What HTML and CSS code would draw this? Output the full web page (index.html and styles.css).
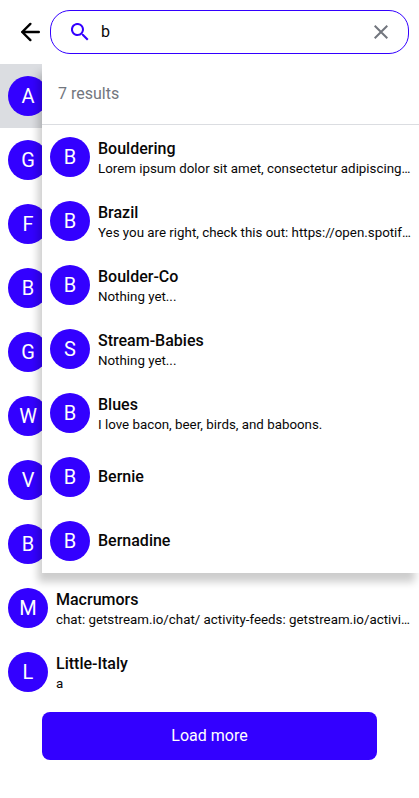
FILE: index.html
```html
<!DOCTYPE html>
<html lang="en">
<head>
<meta charset="utf-8">
<meta name="viewport" content="width=device-width, initial-scale=1">
<title>Channels</title>
<link rel="stylesheet" href="styles.css">
</head>
<body>
<main class="channels">
  <form class="search" role="search">
    <button class="icon-button" type="button" aria-label="Back">
      <svg width="20" height="20" viewBox="0 0 20 20" fill="none" stroke="#000" stroke-width="2.4" stroke-linecap="round" stroke-linejoin="round"><path d="M18.800 10H2.200M10.400 1.900 2.200 10l8.200 8.100"/></svg>
    </button>
    <div class="search-box">
      <svg class="search-icon" width="18" height="18" viewBox="0 0 18 18" fill="#3300ff"><path d="M12.5 11h-.8l-.3-.3A6.500 6.500 0 1 0 10.700 11.400l.3.3v.8l5 5 1.500-1.500-5-5Zm-6 0a4.500 4.500 0 1 1 0-9 4.500 4.500 0 0 1 0 9Z"/></svg>
      <input class="search-input" type="text" value="b" aria-label="Search">
      <button class="icon-button" type="button" aria-label="Clear">
        <svg width="14" height="14" viewBox="0 0 14 14" fill="none" stroke="#72767e" stroke-width="2"><path d="m.7.700 12.600 12.600M13.300.700.700 13.300"/></svg>
      </button>
    </div>
  </form>

  <div class="content">
    <div class="list">
      <button class="row row-active" type="button"><span class="avatar">A</span></button>
      <button class="row" type="button"><span class="avatar">G</span></button>
      <button class="row" type="button"><span class="avatar">F</span></button>
      <button class="row" type="button"><span class="avatar">B</span></button>
      <button class="row" type="button"><span class="avatar">G</span></button>
      <button class="row" type="button"><span class="avatar">W</span></button>
      <button class="row" type="button"><span class="avatar">V</span></button>
      <button class="row" type="button"><span class="avatar">B</span></button>
      <button class="row" type="button"><span class="avatar">M</span><span class="text"><span class="name">Macrumors</span><span class="message">chat: getstream.io/chat/ activity-feeds: getstream.io/activi…</span></span></button>
      <button class="row" type="button"><span class="avatar">L</span><span class="text"><span class="name">Little-Italy</span><span class="message">a</span></span></button>
    </div>
    <section class="results" aria-label="Search results">
      <div class="results-header">7 results</div>
      <button class="row" type="button"><span class="avatar">B</span><span class="text"><span class="name">Bouldering</span><span class="message">Lorem ipsum dolor sit amet, consectetur adipiscing…</span></span></button>
      <button class="row" type="button"><span class="avatar">B</span><span class="text"><span class="name">Brazil</span><span class="message">Yes you are right, check this out: https://open.spotif…</span></span></button>
      <button class="row" type="button"><span class="avatar">B</span><span class="text"><span class="name">Boulder-Co</span><span class="message">Nothing yet...</span></span></button>
      <button class="row" type="button"><span class="avatar">S</span><span class="text"><span class="name">Stream-Babies</span><span class="message">Nothing yet...</span></span></button>
      <button class="row" type="button"><span class="avatar">B</span><span class="text"><span class="name">Blues</span><span class="message">I love bacon, beer, birds, and baboons.</span></span></button>
      <button class="row" type="button"><span class="avatar">B</span><span class="text"><span class="name">Bernie</span></span></button>
      <button class="row" type="button"><span class="avatar">B</span><span class="text"><span class="name">Bernadine</span></span></button>
    </section>
  </div>
  <button class="load-more" type="button">Load more</button>
</main>
</body>
</html>
```
FILE: styles.css
```css
* {
  box-sizing: border-box;
}

body {
  margin: 0;
  background: #fff;
  color: #080707;
  font-family: Roboto, "Liberation Sans", sans-serif;
}

.channels {
  overflow: hidden;
  padding-bottom: 8px;
}

.search {
  display: flex;
  align-items: center;
  height: 64px;
  padding: 0 10px 0 20px;
  gap: 10px;
}

.icon-button {
  display: flex;
  padding: 0;
  border: 0;
  background: none;
  cursor: pointer;
}

.search-box {
  display: flex;
  align-items: center;
  flex: 1;
  min-width: 0;
  height: 44px;
  padding: 0 20px;
  border: 1px solid #3300ff;
  border-radius: 20px;
}

.search-icon {
  flex: none;
  margin-right: 12px;
}

.search-input {
  flex: 1;
  min-width: 0;
  padding: 0;
  border: 0;
  outline: 0;
  background: none;
  color: #080707;
  font: 16px/20px Roboto, "Liberation Sans", sans-serif;
}

.content {
  position: relative;
}

.row {
  display: flex;
  align-items: center;
  gap: 8px;
  width: 100%;
  height: 64px;
  padding: 0 8px;
  border: 0;
  background: none;
  color: inherit;
  font-family: inherit;
  text-align: left;
  cursor: pointer;
}

.row-active {
  background: #dbdde1;
}

.avatar {
  display: flex;
  align-items: center;
  justify-content: center;
  flex: none;
  width: 40px;
  height: 40px;
  border-radius: 50%;
  background: #3300ff;
  color: #fff;
  font-size: 20px;
}

.text {
  display: flex;
  flex-direction: column;
  flex: 1;
  min-width: 0;
}

.name,
.message {
  overflow: hidden;
  line-height: 20px;
  text-overflow: ellipsis;
  white-space: nowrap;
}

.name {
  font-size: 16px;
  font-weight: 500;
}

.name:not(:last-child) {
  padding-top: 4px;
}

.results {
  position: absolute;
  top: 0;
  left: 42px;
  right: 0;
  background: #fff;
  box-shadow: -4px 9px 8px rgba(0, 0, 0, 0.2);
}

.results-header {
  height: 61px;
  padding: 20px 16px;
  border-bottom: 1px solid #dbdde1;
  color: #72767e;
  font-size: 16px;
  line-height: 20px;
}

.load-more {
  display: block;
  width: calc(100% - 84px);
  height: 48px;
  margin: 8px auto 0;
  border: 0;
  border-radius: 8px;
  background: #3300ff;
  color: #fff;
  font: 16px/20px Roboto, "Liberation Sans", sans-serif;
  cursor: pointer;
}
```
